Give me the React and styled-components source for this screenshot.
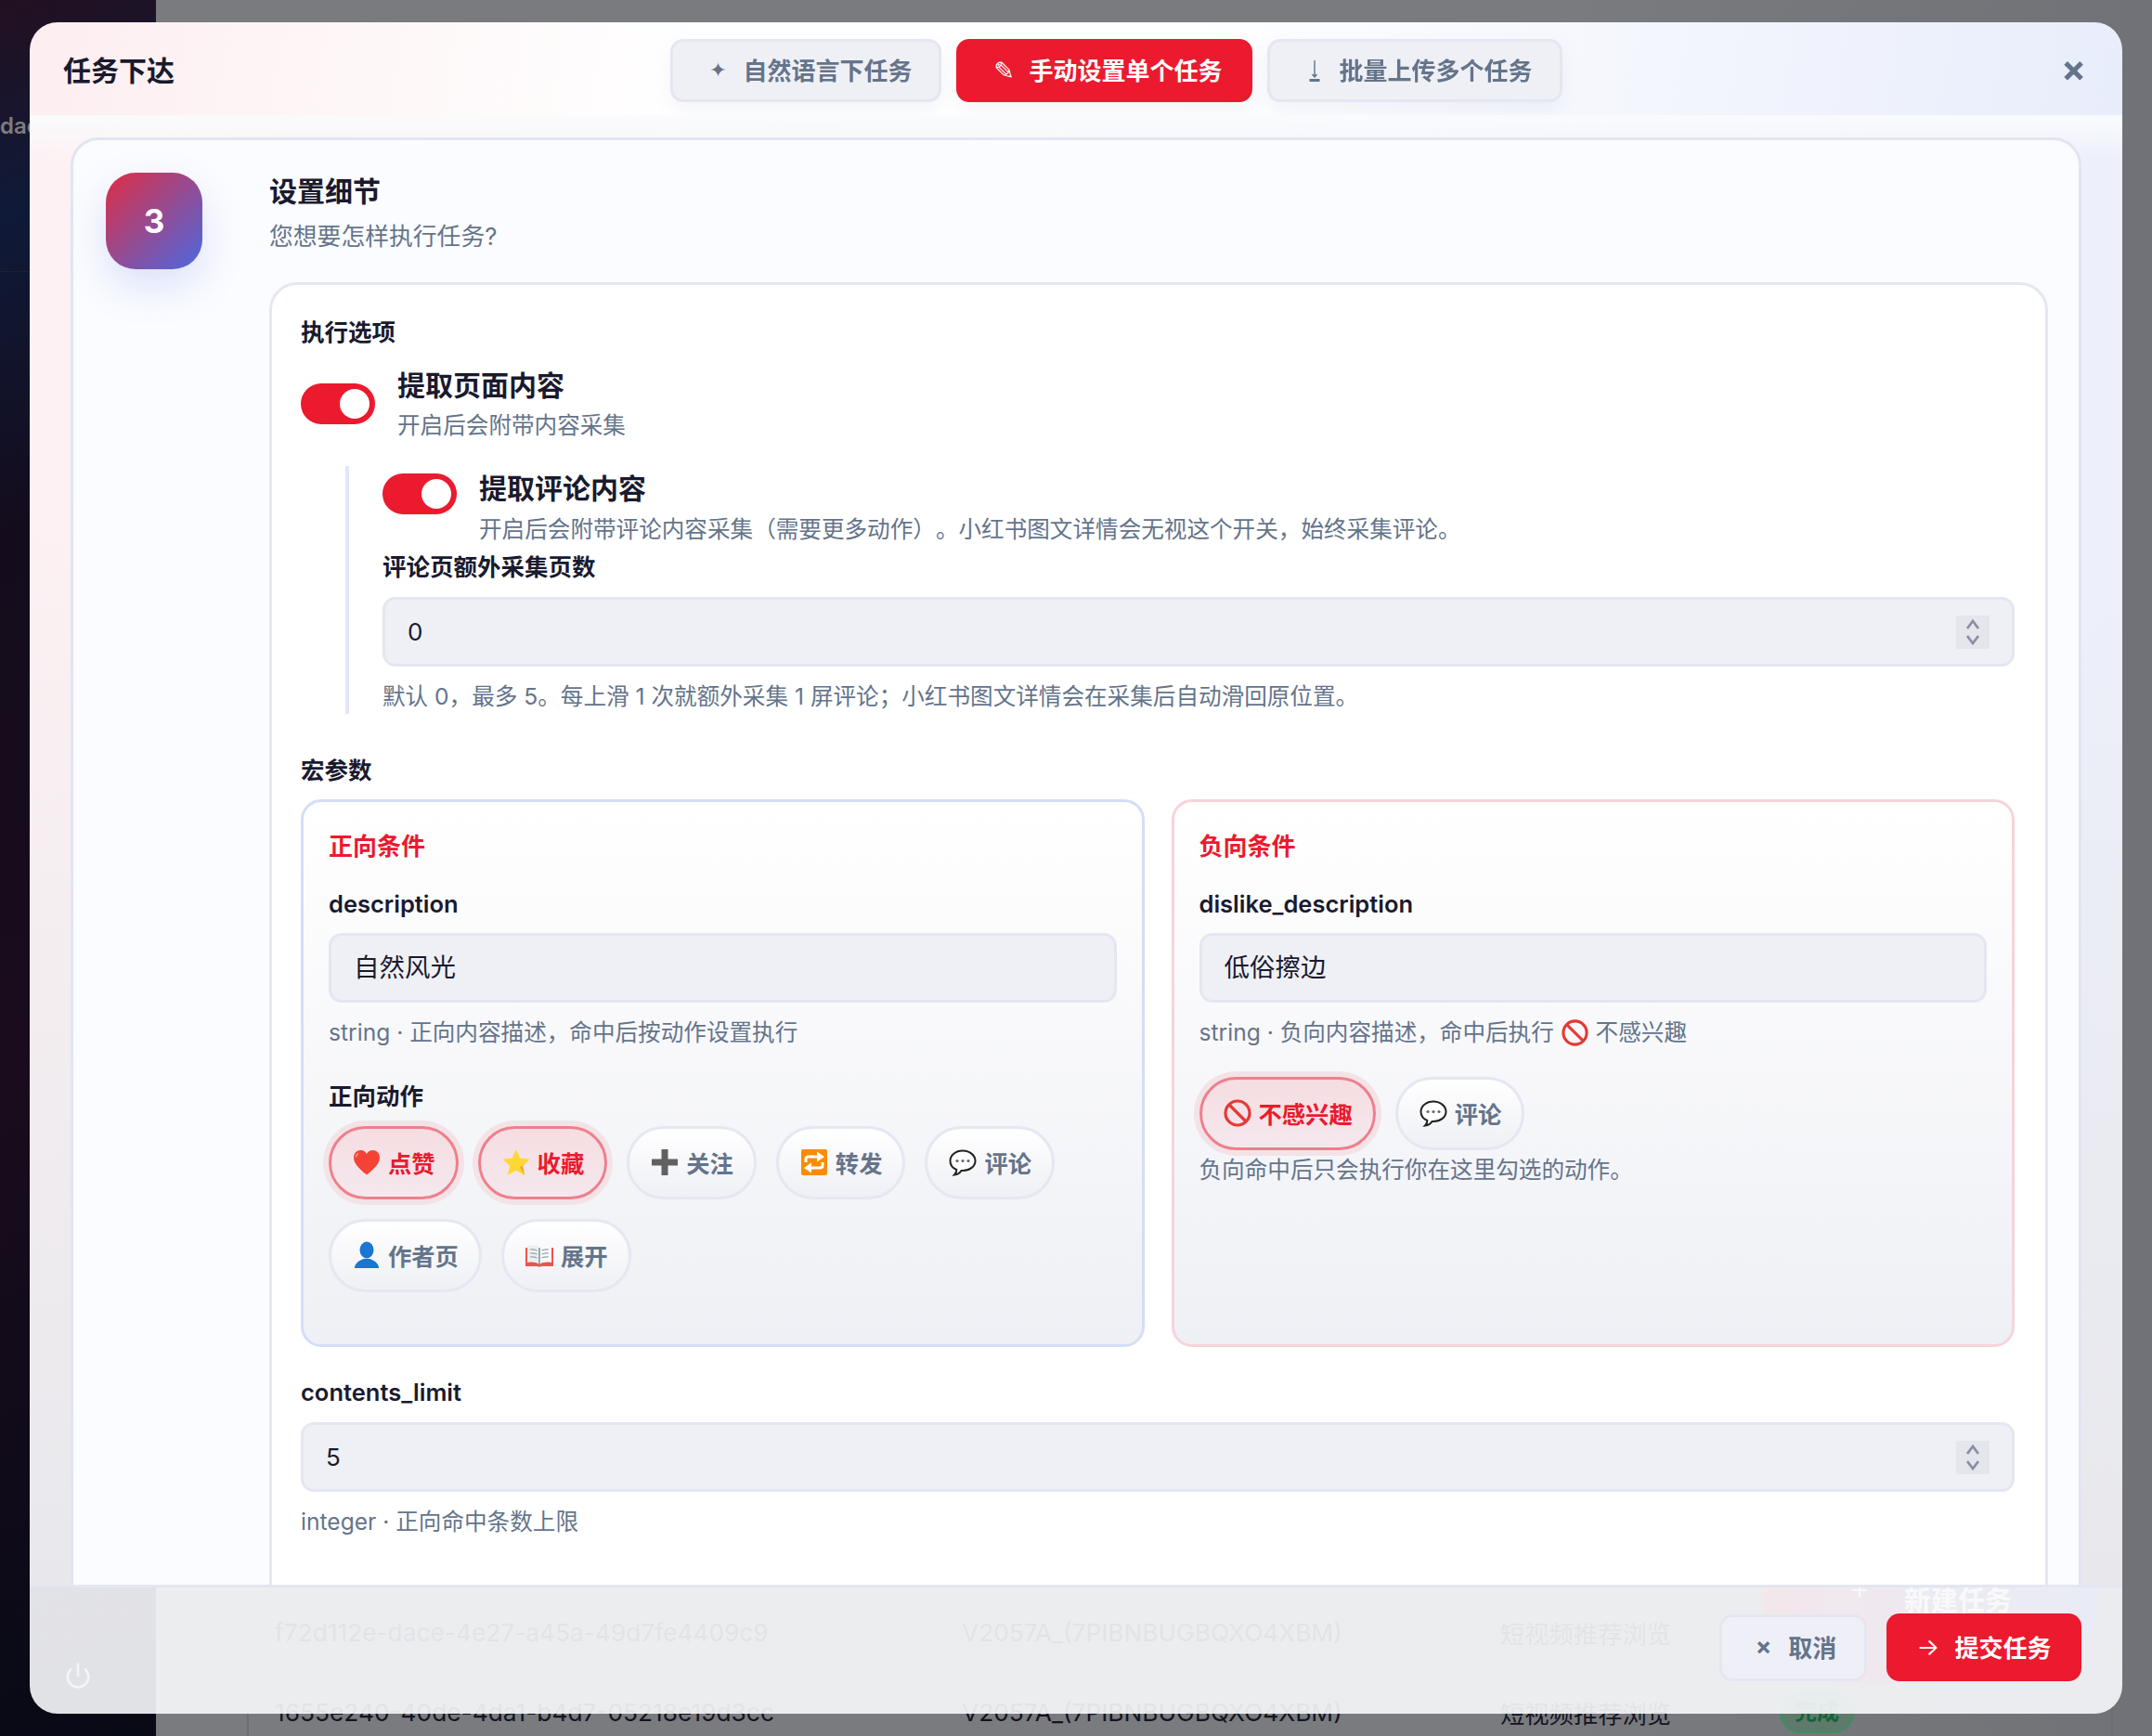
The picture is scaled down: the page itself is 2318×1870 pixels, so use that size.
import React from 'react';
import styled, { createGlobalStyle } from 'styled-components';
import { Power, Plus } from 'lucide-react';

const GlobalStyle = createGlobalStyle`
  html, body {
    margin: 0;
    padding: 0;
    height: 100%;
    overflow: hidden;
  }
  body {
    font-family: Inter, 'Noto Sans CJK SC', sans-serif;
    color: #1a1a2e;
    text-spacing-trim: space-all;
  }
  * {
    box-sizing: border-box;
  }
`;

const HeartIcon = () => (
  <svg viewBox="0 0 32 32">
    <path d="M16 29.500C6 21.500 2 16.500 2 10.500 2 6 5.500 3 9.500 3c2.800 0 5.300 1.500 6.500 4 1.200-2.500 3.700-4 6.500-4C26.500 3 30 6 30 10.500c0 6-4 11-14 19z" fill="#f44336" />
    <path d="M7 6.500c-1.800.8-2.800 2.300-2.800 4.200" stroke="#ff8a80" strokeWidth="1.500" fill="none" />
  </svg>
);

const StarIcon = () => (
  <svg viewBox="0 0 32 32">
    <polygon points="16,2 20.300,11.500 30.500,12.700 23,19.700 25,30 16,24.800 7,30 9,19.700 1.500,12.700 11.700,11.500" fill="#fdd835" />
    <polygon points="30.500,12.700 23,19.700 25,30 20,21.500" fill="#f9a825" />
  </svg>
);

const PlusIcon = () => (
  <svg viewBox="0 0 32 32">
    <path d="M12.500 2h7v10.500H30v7H19.500V30h-7V19.500H2v-7h10.500z" fill="#616161" />
  </svg>
);

const RepeatIcon = () => (
  <svg viewBox="0 0 32 32">
    <rect x="2" y="2" width="28" height="28" rx="2" fill="#fb8c00" />
    <path d="M7 16v-3.500a2.500 2.500 0 0 1 2.500-2.500H20M25 16v3.500a2.500 2.500 0 0 1-2.500 2.500H12" stroke="#fff" strokeWidth="3" fill="none" />
    <polygon points="19,4.500 27,10 19,15.500" fill="#fff" />
    <polygon points="13,16.500 5,22 13,27.500" fill="#fff" />
  </svg>
);

const BubbleIcon = () => (
  <svg viewBox="0 0 32 32">
    <path d="M16 3.500C8.300 3.500 2.500 8.300 2.500 14.500c0 4.200 2.800 7.700 6.800 9.500.2 2-.7 4-2.300 5.500 3.300-.3 6-2 7.500-4.500H16c7.700 0 13.500-4.800 13.500-10.500S23.700 3.500 16 3.500z" fill="#fff" stroke="#222" strokeWidth="2" />
    <circle cx="10" cy="14.500" r="1.600" fill="#5f6b75" />
    <circle cx="16" cy="14.500" r="1.600" fill="#5f6b75" />
    <circle cx="22" cy="14.500" r="1.600" fill="#5f6b75" />
  </svg>
);

const BustIcon = () => (
  <svg viewBox="0 0 32 32">
    <ellipse cx="16" cy="10.500" rx="7.500" ry="9" fill="#1976d2" />
    <path d="M3 30c0-5.500 5-8 9.500-10h7c4.500 2 9.500 4.500 9.500 10z" fill="#1976d2" />
  </svg>
);

const BookIcon = () => (
  <svg viewBox="0 0 32 32">
    <path d="M1 8v20h13c.8 1 3.200 1 4 0h13V8z" fill="#ef5350" />
    <path d="M3 6c5-1.500 9.500-1 13 2v18c-3.500-2.500-8-3-13-2z" fill="#eceff1" />
    <path d="M29 6c-5-1.500-9.500-1-13 2v18c3.500-2.500 8-3 13-2z" fill="#fafafa" />
    <path d="M6 10c2.500-.3 5 0 7.500 1M6 14c2.500-.3 5 0 7.500 1M6 18c2.500-.3 5 0 7.500 1M26 10c-2.500-.3-5 0-7.500 1M26 14c-2.500-.3-5 0-7.500 1M26 18c-2.500-.3-5 0-7.500 1" stroke="#90a4ae" strokeWidth="1.200" fill="none" />
    <path d="M16 8v19" stroke="#78909c" strokeWidth="1.500" />
  </svg>
);

const BanIcon = () => (
  <svg viewBox="0 0 32 32">
    <circle cx="16" cy="16" r="13" fill="none" stroke="#e53935" strokeWidth="3.200" />
    <path d="M7 7l18 18" stroke="#e53935" strokeWidth="3.200" />
  </svg>
);

const DownloadGlyph = () => (
  <svg width="12" height="24" viewBox="0 0 12 24" fill="currentColor">
    <path d="M5.300 1h1.400v15.500l2-1v1.500L6 20 3.300 17v-1.500l2 1z" />
    <rect x="0.500" y="21" width="11" height="3" />
  </svg>
);

const positiveActions = [
  { id: 1, name: '点赞', icon: <HeartIcon />, active: true },
  { id: 2, name: '收藏', icon: <StarIcon />, active: true },
  { id: 3, name: '关注', icon: <PlusIcon /> },
  { id: 4, name: '转发', icon: <RepeatIcon /> },
  { id: 5, name: '评论', icon: <BubbleIcon /> },
  { id: 6, name: '作者页', icon: <BustIcon /> },
  { id: 7, name: '展开', icon: <BookIcon /> },
];

const negativeActions = [
  { id: 1, name: '不感兴趣', icon: <BanIcon />, active: true },
  { id: 2, name: '评论', icon: <BubbleIcon /> },
];

const tabs = [
  { id: 1, name: '自然语言下任务', glyph: '✦', size: 22 },
  { id: 2, name: '手动设置单个任务', glyph: '✎', size: 27, active: true },
  { id: 3, name: '批量上传多个任务', glyph: <DownloadGlyph />, size: 22 },
];

const tableRows = [
  { id: 'f72d112e-dace-4e27-a45a-49d7fe4409c9' },
  { id: '1655e240-40de-4da1-b4d7-05218e19d3cc', done: true },
];

const NumberField = ({ value }) => (
  <Field>
    {value}
    <Spinner>
      <svg viewBox="0 0 36 36" fill="none" stroke="#8a8fa3" strokeWidth="2.800">
        <path d="M12 14l6-8 6 8M12 22l6 8 6-8" />
      </svg>
    </Spinner>
  </Field>
);

const App = () => {
  return (
    <>
      <GlobalStyle />
      <Page>
        <Sidebar>
          <SideText>dac</SideText>
          <SideLine />
          <SidePower>
            <Power size={30} strokeWidth={2} />
          </SidePower>
        </Sidebar>
        <Main>
          <TableCard>
            {tableRows.map((row) => (
              <TableRow key={row.id}>
                <span>{row.id}</span>
                <span>V2057A_(7PIBNBUGBQXO4XBM)</span>
                <span>短视频推荐浏览</span>
                {row.done && <DoneBadge>完成</DoneBadge>}
              </TableRow>
            ))}
          </TableCard>
          <NewTask>
            <Plus size={24} />
            新建任务
          </NewTask>
        </Main>
      </Page>

      <Modal>
        <Header>
          <Title>任务下达</Title>
          <Tabs>
            {tabs.map((tab) => (
              <Tab key={tab.id} $active={tab.active}>
                <TabGlyph $size={tab.size}>{tab.glyph}</TabGlyph>
                {tab.name}
              </Tab>
            ))}
          </Tabs>
          <Close>×</Close>
        </Header>

        <Body>
          <Card>
            <StepBadge>3</StepBadge>
            <CardMain>
              <CardTitle>设置细节</CardTitle>
              <CardSub>您想要怎样执行任务?</CardSub>
              <Panel>
                <SectionTitle>执行选项</SectionTitle>
                <ToggleRow $center>
                  <Switch />
                  <div>
                    <ToggleTitle>提取页面内容</ToggleTitle>
                    <Hint>开启后会附带内容采集</Hint>
                  </div>
                </ToggleRow>

                <Nested>
                  <ToggleRow>
                    <Switch $offset />
                    <div>
                      <ToggleTitle>提取评论内容</ToggleTitle>
                      <Hint $top={3}>开启后会附带评论内容采集（需要更多动作）。小红书图文详情会无视这个开关，始终采集评论。</Hint>
                    </div>
                  </ToggleRow>
                  <SectionTitle $top={5}>评论页额外采集页数</SectionTitle>
                  <NumberField value="0" />
                  <Hint $top={13}>默认 0，最多 5。每上滑 1 次就额外采集 1 屏评论；小红书图文详情会在采集后自动滑回原位置。</Hint>
                </Nested>

                <SectionTitle $top={44}>宏参数</SectionTitle>
                <MacroGrid>
                  <MacroBox>
                    <MacroTitle>正向条件</MacroTitle>
                    <FieldLabel>description</FieldLabel>
                    <Field $large>自然风光</Field>
                    <Hint $top={13}>string · 正向内容描述，命中后按动作设置执行</Hint>
                    <SectionTitle $top={33}>正向动作</SectionTitle>
                    <Chips $top={15}>
                      {positiveActions.map((action) => (
                        <Chip key={action.id} $active={action.active}>
                          <ChipIcon>{action.icon}</ChipIcon>
                          {action.name}
                        </Chip>
                      ))}
                    </Chips>
                  </MacroBox>

                  <MacroBox $negative>
                    <MacroTitle>负向条件</MacroTitle>
                    <FieldLabel>dislike_description</FieldLabel>
                    <Field $large>低俗擦边</Field>
                    <Hint $top={13}>
                      string · 负向内容描述，命中后执行 <InlineIcon><BanIcon /></InlineIcon> 不感兴趣
                    </Hint>
                    <Chips $top={29}>
                      {negativeActions.map((action) => (
                        <Chip key={action.id} $active={action.active}>
                          <ChipIcon>{action.icon}</ChipIcon>
                          {action.name}
                        </Chip>
                      ))}
                    </Chips>
                    <Hint $top={2}>负向命中后只会执行你在这里勾选的动作。</Hint>
                  </MacroBox>
                </MacroGrid>

                <FieldLabel $top={32}>contents_limit</FieldLabel>
                <NumberField value="5" />
                <Hint $top={13}>integer · 正向命中条数上限</Hint>
              </Panel>
            </CardMain>
          </Card>
        </Body>

        <Footer>
          <CancelButton>
            <ButtonGlyph $bold>×</ButtonGlyph>
            取消
          </CancelButton>
          <SubmitButton>
            <ButtonGlyph>→</ButtonGlyph>
            提交任务
          </SubmitButton>
        </Footer>
      </Modal>
    </>
  );
};
export default App;

const Page = styled.div`
  display: flex;
  width: 2318px;
  height: 1870px;
  overflow: hidden;
`;

const Sidebar = styled.aside`
  width: 168px;
  flex-shrink: 0;
  display: flex;
  flex-direction: column;
  padding-top: 120px;
  background: linear-gradient(160deg, #221020 0%, #0f1a38 12%, #140c1c 30%, #1a0c1c 60%, #080a16 100%);
`;

const SideText = styled.div`
  font-size: 24px;
  font-weight: 600;
  color: #7d7d80;
  line-height: 32px;
`;

const SideLine = styled.div`
  height: 1px;
  margin-top: 140px;
  background: #1f1f2c;
`;

const SidePower = styled.div`
  margin-top: auto;
  margin-bottom: 46px;
  padding-left: 69px;
  color: #fff;
  opacity: 0.8;
`;

const Main = styled.main`
  position: relative;
  flex: 1;
  padding: 1716px 42px 0 57px;
  background: linear-gradient(90deg, #7a7b7f, #7a7b7f 70%, #717277);
`;

const TableCard = styled.div`
  margin-left: 41px;
  border-left: 2px solid #6c6d72;
  border-right: 2px solid #6c6d72;
`;

const TableRow = styled.div`
  display: grid;
  grid-template-columns: 740px 580px 301px 1fr;
  align-items: center;
  height: 86px;
  padding-left: 28px;
  border-bottom: 2px solid #717277;
  font-size: 26.3px;
  color: #14141f;
`;

const DoneBadge = styled.span`
  width: 80px;
  height: 45px;
  border-radius: 22px;
  border: 2px solid #3c8f5c;
  background: #5f7a6b;
  color: #14633a;
  font-size: 24px;
  font-weight: 700;
  text-align: center;
  line-height: 40px;
`;

const NewTask = styled.div`
  position: absolute;
  right: 58px;
  bottom: 57px;
  width: 362px;
  height: 176px;
  display: flex;
  justify-content: center;
  gap: 36px;
  padding-top: 64px;
  border-radius: 88px;
  background: linear-gradient(90deg, rgba(224, 45, 69, 0.7), rgba(74, 105, 224, 0.7));
  color: #fff;
  font-size: 29px;
  font-weight: 700;
`;

const Modal = styled.div`
  position: fixed;
  top: 24px;
  left: 32px;
  width: 2254px;
  height: 1822px;
  display: flex;
  flex-direction: column;
  border-radius: 30px;
  overflow: hidden;
`;

const Header = styled.header`
  height: 100px;
  flex-shrink: 0;
  display: flex;
  justify-content: space-between;
  align-items: center;
  padding: 0 42px 0 36px;
  background: linear-gradient(100deg, #fdeef0 0%, #ffffff 32%, #ffffff 55%, #e8edfb 100%);
`;

const Title = styled.h1`
  margin: 4px 0 0;
  font-size: 30px;
  font-weight: 700;
  line-height: 44px;
  color: #1a1a2e;
`;

const Tabs = styled.nav`
  display: flex;
  gap: 16px;
  margin: 4px 3px 0 0;
`;

const Tab = styled.div`
  height: 68px;
  display: flex;
  align-items: center;
  gap: 16px;
  padding: 0 29px 4px 37px;
  border-radius: 14px;
  border: 3px solid ${(p) => (p.$active ? '#eb1a2e' : '#e4e6f1')};
  background: ${(p) => (p.$active ? '#eb1a2e' : '#eff0f5')};
  box-shadow: 0 8px 20px rgba(100, 110, 160, 0.08);
  color: ${(p) => (p.$active ? '#fff' : '#64748b')};
  font-size: 26px;
  font-weight: 700;
`;

const TabGlyph = styled.span`
  width: 22px;
  display: flex;
  justify-content: center;
  margin-top: 4px;
  font-family: 'DejaVu Sans', sans-serif;
  font-size: ${(p) => p.$size}px;
  font-weight: 400;
  line-height: 1;
`;

const Close = styled.div`
  width: 24px;
  text-align: center;
  font-size: 40px;
  font-weight: 700;
  line-height: 36px;
  color: #64748b;
`;

const Body = styled.div`
  flex: 1;
  min-height: 0;
  overflow: hidden;
  padding: 24px 44px 0;
  background: linear-gradient(180deg, #fafbfd 0, rgba(250, 251, 253, 0) 48px),
    linear-gradient(180deg, rgba(232, 232, 236, 0) 25%, #e8e8ec 100%),
    linear-gradient(90deg, #fdf1f3, #f6f7fb 50%, #edf0fb);
`;

const Card = styled.section`
  display: flex;
  gap: 72px;
  padding: 35px 33px 60px 35px;
  border: 3px solid #e2e5f1;
  border-radius: 30px;
  background: #fbfcff;
`;

const StepBadge = styled.div`
  width: 104px;
  height: 104px;
  flex-shrink: 0;
  display: flex;
  align-items: center;
  justify-content: center;
  border-radius: 32px;
  background: linear-gradient(135deg, #e02d45, #4a69e0);
  box-shadow: 0 18px 44px rgba(79, 100, 220, 0.18);
  color: #fff;
  font-size: 35px;
  font-weight: 700;
`;

const CardMain = styled.div`
  flex: 1;
  min-width: 0;
`;

const CardTitle = styled.h2`
  margin: -2px 0 0;
  font-size: 30px;
  font-weight: 700;
  line-height: 44px;
`;

const CardSub = styled.p`
  margin: 8px 0 0;
  font-size: 25.8px;
  line-height: 38px;
  color: #64748b;
`;

const Panel = styled.div`
  margin-top: 30px;
  padding: 34px 33px 80px 31px;
  border: 3px solid #e5e7f1;
  border-radius: 30px;
  background: #fff;
`;

const SectionTitle = styled.div`
  margin-top: ${(p) => p.$top || 0}px;
  font-size: 25.5px;
  font-weight: 700;
  line-height: 34px;
`;

const ToggleRow = styled.div`
  display: flex;
  align-items: ${(p) => (p.$center ? 'center' : 'flex-start')};
  gap: 24px;
  margin-top: ${(p) => (p.$center ? 18 : 0)}px;
`;

const Switch = styled.div`
  position: relative;
  width: 80px;
  height: 44px;
  flex-shrink: 0;
  margin-top: ${(p) => (p.$offset ? 6 : 0)}px;
  border-radius: 22px;
  background: #eb1a2e;

  &::after {
    content: '';
    position: absolute;
    top: 6px;
    right: 6px;
    width: 32px;
    height: 32px;
    border-radius: 50%;
    background: #fff;
  }
`;

const ToggleTitle = styled.div`
  font-size: 30px;
  font-weight: 700;
  line-height: 44px;
`;

const Hint = styled.div`
  margin-top: ${(p) => p.$top ?? 2}px;
  font-size: 24.6px;
  line-height: 38px;
  color: #64748b;
`;

const Nested = styled.div`
  margin: 25px 0 0 48px;
  padding: 2px 0 0 36px;
  border-left: 4px solid #dfe7fb;
`;

const Field = styled.div`
  height: 75px;
  margin-top: ${(p) => (p.$large ? 14 : 15)}px;
  display: flex;
  align-items: center;
  justify-content: space-between;
  padding: 0 24px ${(p) => (p.$large ? 5 : 0)}px;
  border: 3px solid #e4e6f1;
  border-radius: 14px;
  background: #eff0f5;
  font-size: ${(p) => (p.$large ? 27.5 : 26)}px;
  color: #1a1a2e;
`;

const Spinner = styled.div`
  width: 36px;
  height: 36px;
  background: #e5e6ec;
`;

const MacroGrid = styled.div`
  display: grid;
  grid-template-columns: 1fr 1fr;
  gap: 29px;
  margin-top: 14px;
`;

const MacroBox = styled.div`
  padding: 31px 27px 56px 27px;
  border: 3px solid ${(p) => (p.$negative ? '#f6d4da' : '#d4def6')};
  border-radius: 22px;
  background: linear-gradient(180deg, #ffffff, #eff0f5);
`;

const MacroTitle = styled.div`
  font-size: 26px;
  font-weight: 700;
  line-height: 34px;
  color: #eb1a2e;
`;

const FieldLabel = styled.div`
  margin-top: ${(p) => p.$top ?? 28}px;
  font-size: 25.5px;
  font-weight: 600;
  line-height: 34px;
`;

const Chips = styled.div`
  display: flex;
  flex-wrap: wrap;
  gap: 21px;
  margin-top: ${(p) => p.$top}px;
`;

const Chip = styled.div`
  height: 79px;
  display: flex;
  align-items: center;
  gap: 7px;
  padding: 0 22px 2px;
  border-radius: 40px;
  border: 3px solid ${(p) => (p.$active ? '#ef7f8c' : '#e5e7f1')};
  background: ${(p) =>
    p.$active ? 'linear-gradient(180deg, #f6dde1, #f4e8ee)' : 'linear-gradient(180deg, #ffffff, #eff0f5)'};
  box-shadow: ${(p) => (p.$active ? '0 0 0 6px #f3e3e7' : 'none')};
  color: ${(p) => (p.$active ? '#eb1a2e' : '#64748b')};
  font-size: 25.3px;
  font-weight: 700;
`;

const ChipIcon = styled.span`
  width: 32px;
  height: 32px;
  flex-shrink: 0;

  svg {
    display: block;
    width: 100%;
    height: 100%;
  }
`;

const InlineIcon = styled.span`
  display: inline-block;
  width: 31px;
  height: 31px;
  vertical-align: -7px;

  svg {
    display: block;
    width: 100%;
    height: 100%;
  }
`;

const Footer = styled.footer`
  height: 139px;
  flex-shrink: 0;
  display: flex;
  justify-content: flex-end;
  align-items: center;
  gap: 21px;
  padding: 0 44px 7px 0;
  border-top: 3px solid #e4e6f1;
  background: rgba(247, 248, 251, 0.91);
`;

const CancelButton = styled.div`
  width: 159px;
  height: 72px;
  display: flex;
  align-items: center;
  justify-content: center;
  gap: 18px;
  padding: 0 0 2px 6px;
  border: 3px solid #e4e6f1;
  border-radius: 14px;
  background: #eff0f7;
  color: #64748b;
  font-size: 26px;
  font-weight: 700;
`;

const SubmitButton = styled.div`
  width: 210px;
  height: 73px;
  display: flex;
  align-items: center;
  justify-content: center;
  gap: 16px;
  padding-bottom: 2px;
  border-radius: 14px;
  background: #eb1a2e;
  color: #fff;
  font-size: 26px;
  font-weight: 700;
`;

const ButtonGlyph = styled.span`
  font-size: 26px;
  font-weight: ${(p) => (p.$bold ? 700 : 400)};
  line-height: 1;
`;
